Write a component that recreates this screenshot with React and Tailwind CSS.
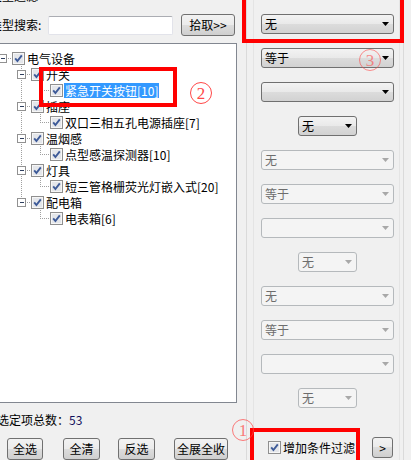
import React from 'react';

const treeRows = [
  { level: 0, text: '电气设备', exp: true, pass: [], last: true },
  { level: 1, text: '开关', exp: true, pass: [] },
  { level: 2, text: '紧急开关按钮[10]', pass: [1], last: true, selected: true },
  { level: 1, text: '插座', exp: true, pass: [] },
  { level: 2, text: '双口三相五孔电源插座[7]', pass: [1], last: true },
  { level: 1, text: '温烟感', exp: true, pass: [] },
  { level: 2, text: '点型感温探测器[10]', pass: [1], last: true },
  { level: 1, text: '灯具', exp: true, pass: [] },
  { level: 2, text: '短三管格栅荧光灯嵌入式[20]', pass: [1], last: true },
  { level: 1, text: '配电箱', exp: true, pass: [], last: true },
  { level: 2, text: '电表箱[6]', pass: [], last: true },
];

const CheckBox = () => (
  <svg width="13" height="13" className="shrink-0">
    <rect x="0.5" y="0.5" width="12" height="12" fill="#f6f6f6" stroke="#8f8f8f" />
    <rect x="2" y="2" width="9" height="9" fill="#e4e6ea" />
    <path d="M3.2 6.4 L5.4 9 L9.8 3.4" stroke="#3d5a98" strokeWidth="1.9" fill="none" />
  </svg>
);

// x of the expander / line column for a level (row starts 4px left of the box)
const cx = (l) => 6 + 19 * l;

const TreeRow = ({ row }) => {
  const x = cx(row.level);
  return (
    <div className="flex items-center h-[16px] -ml-[4px]">
      <svg width={x + 10} height="16" className="shrink-0" shapeRendering="crispEdges">
        {row.pass.map((a) => (
          <line key={a} x1={cx(a) + 0.5} y1="0" x2={cx(a) + 0.5} y2="16" stroke="#a0a0a0" strokeDasharray="1 1" />
        ))}
        {row.level > 0 && (
          <line x1={x + 0.5} y1="0" x2={x + 0.5} y2={row.last ? 9 : 16} stroke="#a0a0a0" strokeDasharray="1 1" />
        )}
        <line x1={x} y1="8.5" x2={x + 10} y2="8.5" stroke="#a0a0a0" strokeDasharray="1 1" />
        {row.exp && (
          <g>
            <rect x={x - 3.5} y="4.5" width="8" height="8" fill="#ffffff" stroke="#919191" />
            <line x1={x - 1} y1="8.5" x2={x + 3} y2="8.5" stroke="#2f3f5f" />
          </g>
        )}
      </svg>
      <CheckBox />
      <span
        className={
          row.selected
            ? 'ml-[1px] px-[1px] h-[15px] leading-[15px] bg-[#3399ff] text-white whitespace-nowrap'
            : 'ml-[2px] h-[15px] leading-[15px] text-black whitespace-nowrap'
        }
      >
        {row.text}
      </span>
    </div>
  );
};

const WinButton = ({ children, className }) => (
  <div
    className={`flex items-center justify-center rounded-[3px] border border-[#707070] bg-[linear-gradient(#f2f2f2,#ebebeb_50%,#dddddd_50%,#cfcfcf)] text-black ${className}`}
  >
    {children}
  </div>
);

const Combo = ({ text, small, disabled }) => (
  <div
    className={`flex items-center shrink-0 h-[20px] rounded-[3px] border ${small ? 'w-[59px] self-center' : 'w-[133px]'} ${
      disabled
        ? 'border-[#b5b9bc] bg-[#f4f4f4] text-[#6d6d6d]'
        : 'border-[#707070] bg-[linear-gradient(#f3f3f3,#e9e9e9_50%,#dcdcdc_50%,#d2d2d2)] text-black'
    }`}
  >
    <span className="pl-[3px] leading-[18px]">{text}</span>
    <svg width="7" height="4" className="ml-auto mr-[4px]">
      <path d="M0 0 H7 L3.5 4 Z" fill={disabled ? '#a8a8a8' : '#000000'} />
    </svg>
  </div>
);

const Circled = ({ n, className }) => (
  <div
    className={`absolute w-[22px] h-[22px] rounded-full border border-[#ff4848] flex items-center justify-center text-[#ff4848] text-[17px] leading-none font-['Liberation_Serif',serif] ${className}`}
  >
    {n}
  </div>
);

export default function App() {
  const groups = [0, 1, 2];
  return (
    <div className="relative w-[411px] h-[460px] overflow-hidden bg-[#f0f0f0] flex text-[12px] font-['Noto_Sans_CJK_SC',sans-serif] text-black">
      {/* left side */}
      <div className="w-[237px] shrink-0 flex flex-col">
        <div className="h-[14px] -mt-[11px] -ml-[10px] leading-[14px] whitespace-nowrap">类型过滤</div>
        <div className="flex items-center h-[22px] mt-[11px]">
          <span className="-ml-[10px] w-[52px] whitespace-nowrap leading-[14px]">类型搜索:</span>
          <div className="ml-[6px] w-[125px] h-[19px] bg-white border border-[#e2e3ea] border-t-[#abadb3] rounded-[2px]" />
          <WinButton className="ml-[8px] w-[54px] h-[22px]">拾取&gt;&gt;</WinButton>
        </div>
        <div className="mt-[7px] -ml-[1px] w-[238px] h-[361px] border border-[#828790] bg-white overflow-hidden pt-[6px]">
          {treeRows.map((r, i) => (
            <TreeRow key={i} row={r} />
          ))}
        </div>
        <div className="mt-[10px] -ml-[3px] h-[14px] leading-[14px] whitespace-nowrap">
          选定项总数：<span className="text-[#10105a]">53</span>
        </div>
        <div className="flex mt-[11px]">
          <WinButton className="ml-[7px] w-[36px] h-[22px]">全选</WinButton>
          <WinButton className="ml-[20px] w-[37px] h-[22px]">全清</WinButton>
          <WinButton className="ml-[18px] w-[37px] h-[22px]">反选</WinButton>
          <WinButton className="ml-[19px] w-[54px] h-[22px]">全展全收</WinButton>
        </div>
      </div>

      {/* right side */}
      <div className="w-[174px] shrink-0 flex">
        <div className="ml-[9px] w-[158px] border-l border-r border-[#dadada] flex">
          <div className="ml-[6px] mr-[3px] flex-1 border-l border-r border-[#e4e4e4] flex flex-col pt-[14px] pl-[7px] pr-[5px] gap-[14px]">
            {groups.map((g) => (
              <React.Fragment key={g}>
                <Combo text="无" disabled={g > 0} />
                <Combo text="等于" disabled={g > 0} />
                <Combo text="" disabled={g > 0} />
                <Combo text="无" small disabled={g > 0} />
              </React.Fragment>
            ))}
            <div className="flex items-center h-[21px] mt-[15px] -mr-[5px]">
              <div className="ml-[7px]">
                <CheckBox />
              </div>
              <span className="ml-[2px] leading-[14px] whitespace-nowrap">增加条件过滤</span>
              <WinButton className="ml-[17px] w-[21px] h-[21px]">&gt;</WinButton>
            </div>
          </div>
        </div>
      </div>

      {/* annotations */}
      <div className="absolute left-[39px] top-[67px] w-[138px] h-[40px] border-[4px] border-[#ff0000]" />
      <div className="absolute left-[242px] -top-[10px] w-[162px] h-[53px] border-[4px] border-[#ff0000]" />
      <div className="absolute left-[250px] top-[428px] w-[110px] h-[40px] border-[4px] border-[#ff0000]" />
      <Circled n="2" className="left-[190px] top-[82px]" />
      <Circled n="3" className="left-[359px] top-[49px] opacity-60" />
      <Circled n="1" className="left-[232px] top-[419px] opacity-70" />
    </div>
  );
}
